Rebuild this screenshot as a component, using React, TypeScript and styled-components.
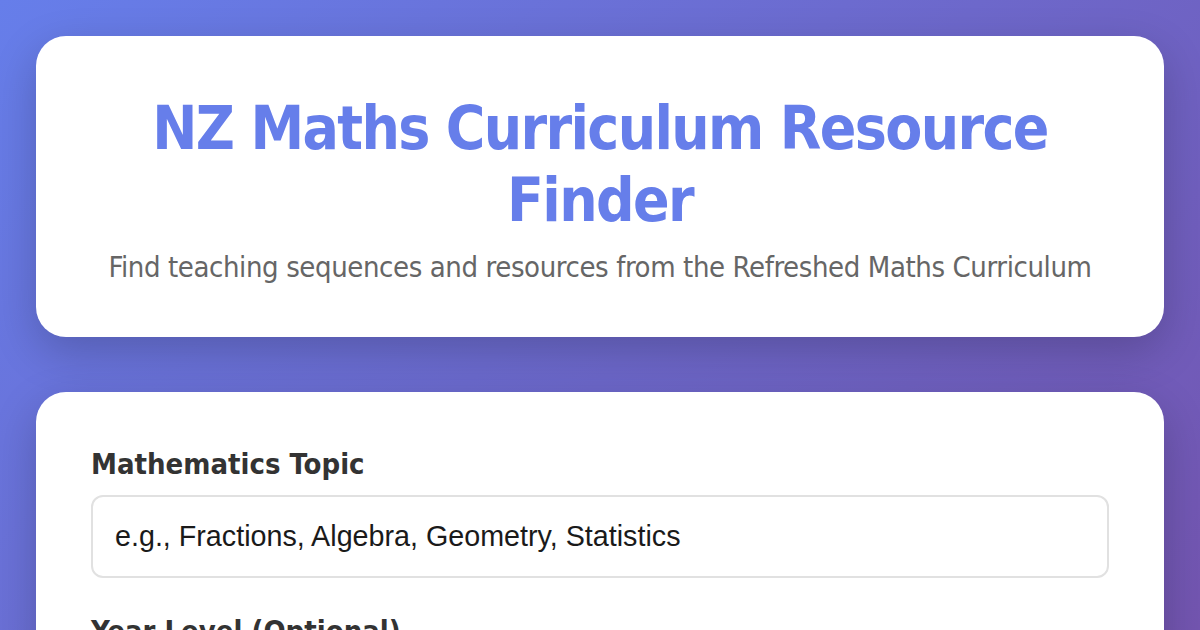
import styled, { createGlobalStyle } from 'styled-components';

const GlobalStyle = createGlobalStyle`
  html,
  body {
    margin: 0;
    padding: 0;
  }

  * {
    box-sizing: border-box;
  }
`;

const YEAR_LEVELS = ['Any year level', 'Year 1', 'Year 2', 'Year 3', 'Year 4', 'Year 5', 'Year 6', 'Year 7', 'Year 8'];

export default function App() {
  return (
    <>
      <GlobalStyle />
      <Page>
        <HeaderCard>
          <Title>NZ Maths Curriculum Resource Finder</Title>
          <Subtitle>Find teaching sequences and resources from the Refreshed Maths Curriculum</Subtitle>
        </HeaderCard>

        <FormCard>
          <FormGroup>
            <Label htmlFor="topic">Mathematics Topic</Label>
            <TextInput id="topic" type="text" placeholder="e.g., Fractions, Algebra, Geometry, Statistics" />
          </FormGroup>

          <FormGroup>
            <Label htmlFor="year">Year Level (Optional)</Label>
            <Select id="year" defaultValue="Any year level">
              {YEAR_LEVELS.map((level) => (
                <option key={level}>{level}</option>
              ))}
            </Select>
          </FormGroup>

          <SearchButton type="button">Find Resources</SearchButton>
        </FormCard>
      </Page>
    </>
  );
}

const Page = styled.div`
  height: 100vh;
  overflow: hidden;
  padding: 36px;
  background: linear-gradient(135deg, #667eea 0%, #7355b0 100%);
  font-family: 'DejaVu Sans Condensed', 'DejaVu Sans', Verdana, sans-serif;
  font-stretch: condensed;
`;

const Card = styled.section`
  background: #ffffff;
  border-radius: 30px;
  box-shadow: 0 15px 45px rgba(0, 0, 0, 0.2);
`;

const HeaderCard = styled(Card)`
  padding: 56px 40px 53px;
  text-align: center;
`;

const Title = styled.h1`
  margin: 0 0 14px;
  font-size: 60px;
  line-height: 72px;
  font-weight: 700;
  letter-spacing: -1.65px;
  color: #667eea;
`;

const Subtitle = styled.p`
  margin: 0;
  font-size: 29px;
  line-height: 34px;
  letter-spacing: -0.4px;
  color: #666666;
`;

const FormCard = styled(Card)`
  margin-top: 55px;
  padding: 55px;
`;

const FormGroup = styled.div`
  display: flex;
  flex-direction: column;
  gap: 14px;
  margin-bottom: 36px;
`;

const Label = styled.label`
  font-size: 29px;
  line-height: 34px;
  font-weight: 700;
  color: #333333;
`;

const fieldStyles = `
  width: 100%;
  height: 83px;
  padding: 0 22px;
  border: 2px solid #e1e1e1;
  border-radius: 12px;
  background: #ffffff;
  font-family: 'Liberation Sans', Arial, sans-serif;
  font-stretch: normal;
  font-size: 28.7px;
  color: #1a1a1a;
  outline: none;
`;

const TextInput = styled.input`
  ${fieldStyles}

  &::placeholder {
    color: #1a1a1a;
    opacity: 1;
  }
`;

const Select = styled.select`
  ${fieldStyles}
`;

const SearchButton = styled.button`
  width: 100%;
  height: 80px;
  border: none;
  border-radius: 12px;
  background: linear-gradient(135deg, #667eea 0%, #764ba2 100%);
  color: #ffffff;
  font-family: inherit;
  font-size: 29px;
  font-weight: 700;
`;
